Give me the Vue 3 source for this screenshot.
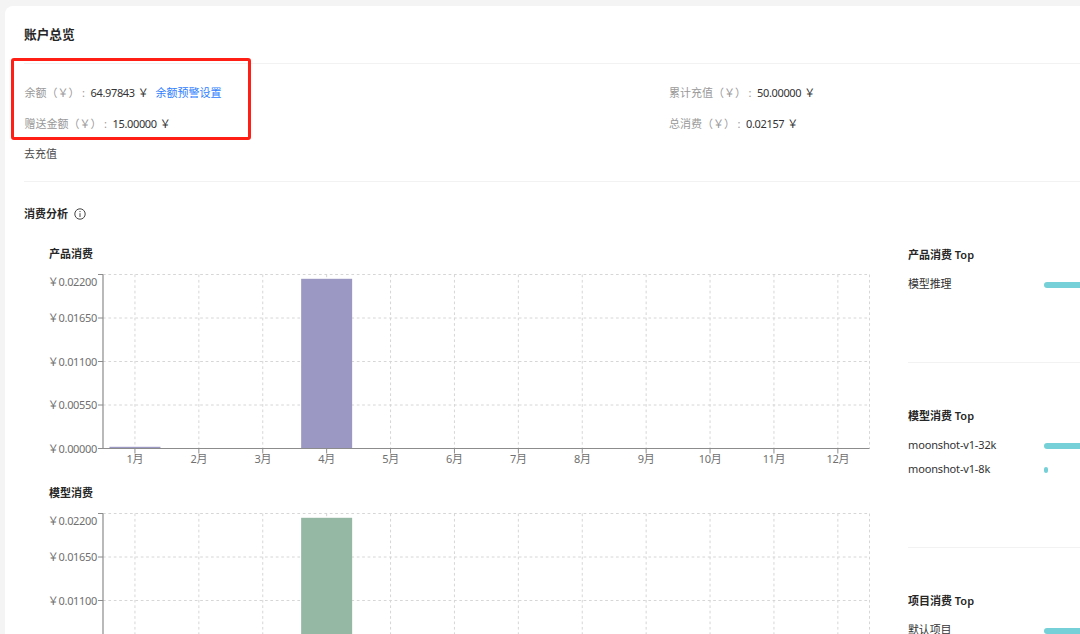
<template>
  <div class="page">
    <main class="card">
      <h1 class="card-title">账户总览</h1>

      <section class="overview">
        <div class="overview-col">
          <div class="field">
            <span class="label">余额（￥）<i class="colon">:</i></span>
            <span class="value">64.97843 ￥</span>
            <a class="link">余额预警设置</a>
          </div>
          <div class="field">
            <span class="label">赠送金额（￥）<i class="colon">:</i></span>
            <span class="value">15.00000 ￥</span>
          </div>
          <a class="recharge">去充值</a>
        </div>
        <div class="overview-col">
          <div class="field">
            <span class="label">累计充值（￥）<i class="colon">:</i></span>
            <span class="value">50.00000 ￥</span>
          </div>
          <div class="field">
            <span class="label">总消费（￥）<i class="colon">:</i></span>
            <span class="value">0.02157 ￥</span>
          </div>
        </div>
        <div class="highlight"></div>
      </section>

      <h2 class="section-title">
        消费分析
        <svg class="info" viewBox="0 0 12 12">
          <circle cx="6" cy="6" r="5.2" />
          <path d="M6 5.2V9M6 3v1.1" />
        </svg>
      </h2>

      <section class="analysis">
        <div class="charts">
          <div v-for="chart in charts" :key="chart.title" class="chart">
            <h3 class="sub-title">{{ chart.title }}</h3>
            <svg class="plot" width="831" height="208" viewBox="0 0 831 208">
              <g class="grid">
                <line v-for="(t, i) in ticks" :key="t" x1="54" x2="820.5" :y1="rowY(i)" :y2="rowY(i)" />
                <line v-for="m in 12" :key="m" :x1="monthX(m)" :x2="monthX(m)" y1="10.5" y2="184.5" />
                <line x1="820.5" x2="820.5" y1="10.5" y2="184.5" />
              </g>
              <g class="axis">
                <path d="M54 10.5V184.5H820.5" />
                <line v-for="(t, i) in ticks" :key="t" x1="49" x2="54" :y1="rowY(i)" :y2="rowY(i)" />
                <line v-for="m in 12" :key="m" :x1="monthX(m)" :x2="monthX(m)" y1="184.5" y2="189.5" />
              </g>
              <rect
                v-for="bar in chart.bars"
                :key="bar.month"
                :x="monthX(bar.month) - 25.5"
                :y="184 - bar.height"
                width="51"
                :height="bar.height"
                :fill="chart.color" />
              <text
                v-for="(t, i) in chart.labels"
                :key="t"
                class="tick"
                x="48"
                :y="i === 0 ? 22.3 : rowY(i) + 4"
                text-anchor="end"><tspan>￥</tspan><tspan>{{ t }}</tspan></text>
              <template v-if="chart.months">
                <text
                  v-for="m in chart.months"
                  :key="m"
                  class="tick"
                  :x="monthX(m)"
                  y="199"
                  text-anchor="middle">{{ m }}月</text>
              </template>
            </svg>
          </div>
        </div>

        <aside class="rankings">
          <div v-for="rank in rankings" :key="rank.title" class="ranking">
            <h3 class="sub-title">{{ rank.title }}</h3>
            <div v-for="item in rank.items" :key="item.name" class="rank-row">
              <span class="rank-name">{{ item.name }}</span>
              <span class="rank-bar" :style="{ width: item.width + 'px' }"></span>
            </div>
          </div>
        </aside>
      </section>
    </main>
  </div>
</template>

<script setup>
const ticks = ['0.02200', '0.01650', '0.01100', '0.00550', '0.00000'];

const charts = [
  {
    title: '产品消费',
    color: '#9c98c4',
    labels: ticks,
    months: 12,
    bars: [{ month: 1, height: 1.2 }, { month: 4, height: 169.2 }],
  },
  {
    title: '模型消费',
    color: '#95b8a4',
    labels: ticks.slice(0, 3),
    months: 0,
    bars: [{ month: 1, height: 1.2 }, { month: 4, height: 169.2 }],
  },
];

const rankings = [
  { title: '产品消费 Top', items: [{ name: '模型推理', width: 120 }] },
  {
    title: '模型消费 Top',
    items: [
      { name: 'moonshot-v1-32k', width: 120 },
      { name: 'moonshot-v1-8k', width: 4 },
    ],
  },
  { title: '项目消费 Top', items: [{ name: '默认项目', width: 120 }] },
];

const rowY = (i) => 10.5 + i * 43.5;
const monthX = (m) => 54 + (m - 0.5) * 63.9;
</script>

<style>
body {
  background: #f4f4f4;
}
</style>

<style scoped>
.page {
  box-sizing: border-box;
  height: 634px;
  padding: 6px 0 0 5px;
  overflow: hidden;
  font-family: "Noto Sans", "Noto Sans CJK SC", sans-serif;
  font-size: 11px;
  line-height: 16px;
  color: #333;
}

.card {
  height: 700px;
  padding-left: 19px;
  background: #fff;
  border-radius: 8px 0 0 0;
}

h1,
h2,
h3 {
  margin: 0;
  font-weight: 600;
  color: #262626;
}

.card-title {
  height: 57px;
  line-height: 57px;
  font-size: 12.7px;
  border-bottom: 1px solid #f2f2f2;
}

.overview {
  position: relative;
  display: flex;
  height: 117px;
  border-bottom: 1px solid #f2f2f2;
}

.overview-col {
  width: 645px;
  padding-top: 21px;
  flex-shrink: 0;
}

.field {
  display: flex;
  height: 16px;
  margin-bottom: 15px;
  white-space: nowrap;
}

.overview-col:first-child .field {
  padding-left: 0.5px;
}

.label {
  color: #999;
}

.colon {
  display: inline-block;
  width: 11px;
  padding-left: 2.5px;
  box-sizing: border-box;
  font-style: normal;
}

.value {
  letter-spacing: -0.34px;
  word-spacing: 0.5px;
}

.link {
  margin-left: 7px;
  color: #2f80ff;
}

.recharge {
  display: block;
  margin-top: -1px;
  color: #4a4a4a;
}

/* Red frame over the balance fields */
.highlight {
  position: absolute;
  left: -13px;
  top: -6px;
  width: 234px;
  height: 76px;
  border: 3px solid #ff1f14;
  border-radius: 3px;
}

.section-title {
  display: flex;
  align-items: center;
  gap: 6px;
  height: 64px;
  font-size: 11px;
}

.info {
  width: 12px;
  height: 12px;
  fill: none;
  stroke: #444;
  stroke-width: 1;
}

.analysis {
  display: flex;
  padding-left: 25px;
}

.charts {
  width: 859px;
  flex-shrink: 0;
}

.chart {
  height: 239px;
}

.sub-title {
  height: 18px;
  font-size: 11px;
  line-height: 16px;
}

.plot {
  display: block;
}

.grid line {
  stroke: #d6d6d6;
  stroke-dasharray: 2.7 2.7;
}

.axis path,
.axis line {
  fill: none;
  stroke: #8c8c8c;
}

.axis path {
  stroke-width: 1.2;
}

.tick {
  font-size: 11px;
  fill: #707070;
  letter-spacing: -0.32px;
}

.rankings {
  flex: 1;
  padding-top: 1px;
  overflow: hidden;
}

.ranking {
  box-sizing: border-box;
  height: 116px;
  margin-bottom: 45px;
  border-bottom: 1px solid #f2f2f2;
}

.ranking:nth-child(2) {
  height: 140px;
}

.ranking .sub-title {
  height: 29px;
}

.rank-row {
  display: flex;
  align-items: center;
  height: 16px;
  margin-bottom: 8px;
}

.rank-name {
  width: 135.5px;
  flex-shrink: 0;
  letter-spacing: -0.15px;
}

.rank-bar {
  height: 6px;
  margin-top: 2px;
  flex-shrink: 0;
  background: #75d1d7;
  border-radius: 3px;
}
</style>
